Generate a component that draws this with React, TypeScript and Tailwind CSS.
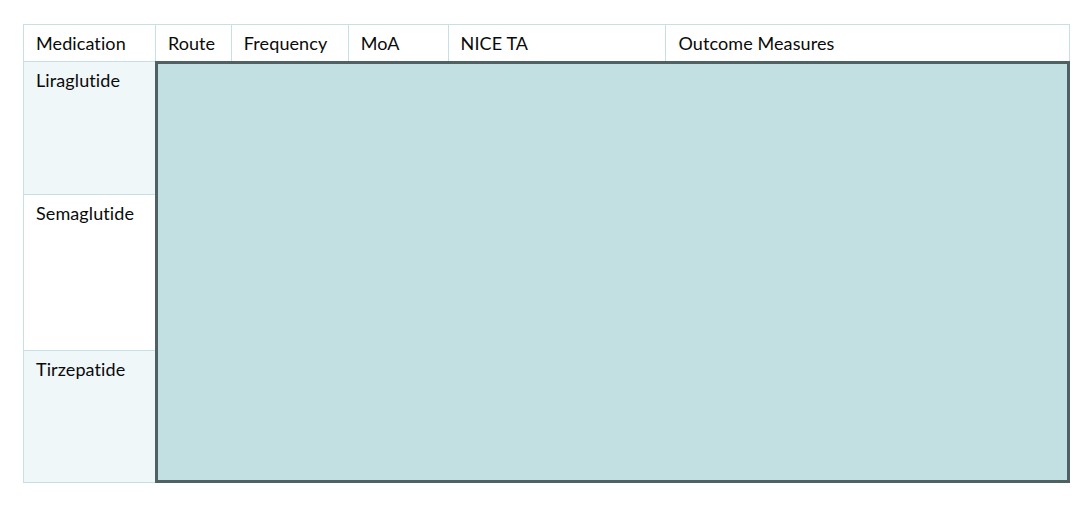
import React from 'react';

const headers = [
  { label: 'Medication', w: 'w-[132px]' },
  { label: 'Route', w: 'w-[76px]' },
  { label: 'Frequency', w: 'w-[117px]' },
  { label: 'MoA', w: 'w-[100px]' },
  { label: 'NICE TA', w: 'w-[218px]' },
  { label: 'Outcome Measures', w: 'w-[404px]' },
];

const meds = [
  { name: 'Liraglutide', h: 'h-[133px]', bg: 'bg-[#f0f7f8]' },
  { name: 'Semaglutide', h: 'h-[156px]', bg: 'bg-white' },
  { name: 'Tirzepatide', h: 'h-[132px]', bg: 'bg-[#f0f7f8]' },
];

export default function App() {
  return (
    <div
      className="min-h-screen bg-white pl-[23px] pt-[24px] text-[18px] tracking-[0.1px] text-[#0a0a0a]"
      style={{ fontFamily: 'Lato, "Open Sans", sans-serif' }}
    >
      <div className="w-[1047px]">
        <div className="flex h-[38px] border-t border-l border-[#c6e1e5]">
          {headers.map((h) => (
            <div
              key={h.label}
              className={`${h.w} flex items-center border-r border-b border-[#c6e1e5] pl-[12px]`}
            >
              {h.label}
            </div>
          ))}
        </div>
        <div className="flex">
          <div className="flex w-[132px] flex-col">
            {meds.map((m) => (
              <div
                key={m.name}
                className={`${m.h} ${m.bg} border-l border-b border-[#c6e1e5] pl-[12px] pt-[5px]`}
              >
                {m.name}
              </div>
            ))}
          </div>
          <div className="-mt-[1px] h-[422px] w-[915px] border-[3px] border-[#4f6163] bg-[#c2dfe1]" />
        </div>
      </div>
    </div>
  );
}
